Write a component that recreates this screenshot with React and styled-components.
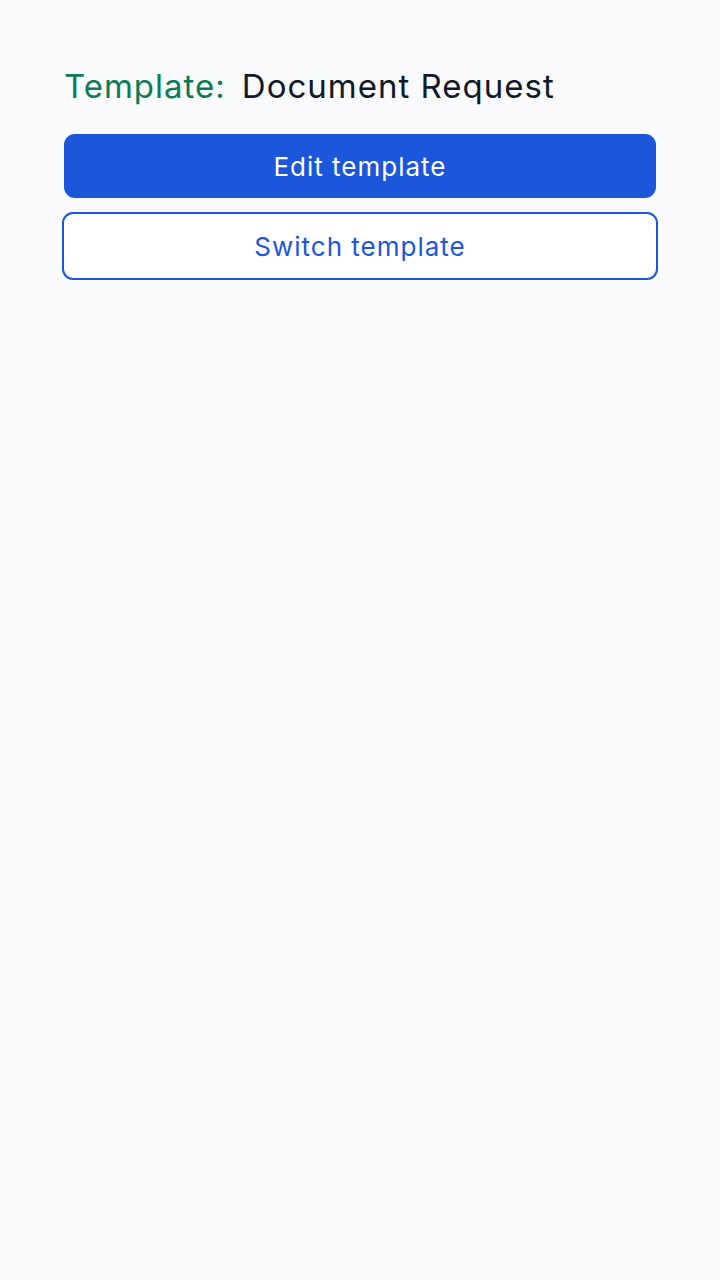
import React from 'react';
import styled, {createGlobalStyle} from 'styled-components';

const GlobalStyle = createGlobalStyle`
  html, body {
    margin: 0;
    padding: 0;
    background: #f8fafc;
  }
  body {
    font-family: Inter, "Noto Sans", sans-serif;
  }
`;

const Page = styled.div`
  min-height: 100vh;
  background-color: #f8fafc;
  padding: 62px 62px 0 62px;
  box-sizing: border-box;
`;

const Heading = styled.h1`
  margin: 0 0 0 2px;
  font-size: 33px;
  font-weight: 400;
  letter-spacing: 1px;
  line-height: 48px;
  display: flex;
  gap: 16px;
`;

const Label = styled.span`
  color: #0f7a55;
`;

const Name = styled.span`
  color: #111827;
`;

const Actions = styled.div`
  margin-top: 24px;
  display: flex;
  flex-direction: column;
  gap: 14px;
`;

const Button = styled.button`
  box-sizing: border-box;
  font-family: Inter, "Noto Sans", sans-serif;
  font-size: 26px;
  font-weight: 400;
  letter-spacing: 1px;
  border-radius: 11px;
  cursor: pointer;
  ${(p) =>
    p.$outline
      ? `
    width: 596px;
    height: 68px;
    background-color: #ffffff;
    color: #1b56db;
    border: 2px solid #1b56db;
  `
      : `
    width: 592px;
    height: 64px;
    margin-left: 2px;
    background-color: #1b56db;
    color: #ffffff;
    border: none;
  `}
`;

const App = () => {
  return (
    <>
      <GlobalStyle />
      <Page>
        <Heading>
          <Label>Template:</Label>
          <Name>Document Request</Name>
        </Heading>
        <Actions>
          <Button>Edit template</Button>
          <Button $outline>Switch template</Button>
        </Actions>
      </Page>
    </>
  );
};

export default App;
